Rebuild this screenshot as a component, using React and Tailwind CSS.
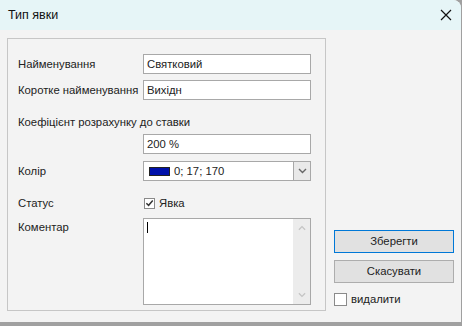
import React from "react";

const Check = () => (
  <svg width="10" height="10" viewBox="0 0 10 10" className="block">
    <path d="M1.5 5.2 L4 7.6 L8.6 2.2" fill="none" stroke="#333" strokeWidth="1.6" />
  </svg>
);

const Chevron = ({ up, color = "#8a8a8a", w = 9 }) => (
  <svg width={w} height="6" viewBox="0 0 9 6" className="block">
    <path d={up ? "M1 5 L4.5 1.5 L8 5" : "M1 1 L4.5 4.5 L8 1"} fill="none" stroke={color} strokeWidth="1.4" />
  </svg>
);

export default function App() {
  const font = { fontFamily: '"Liberation Sans", Arial, sans-serif' };
  return (
    <div className="w-[462px] h-[326px] bg-[#a0a0a0] relative overflow-hidden text-[11.3px] text-[#222]" style={font}>
      <div className="w-[461px] h-[322px] bg-[#f3f3f3] rounded-tr-[8px] flex flex-col overflow-hidden">
        <div className="h-[30px] bg-[#e6f5f7] flex items-center justify-between pl-[8px] pr-[9px] shrink-0">
          <span className="text-[12.5px] text-[#111]">Тип явки</span>
          <svg width="12" height="12" viewBox="0 0 12 12">
            <path d="M1 1 L11 11 M11 1 L1 11" stroke="#111" strokeWidth="1.2" />
          </svg>
        </div>
        <div className="flex-1 flex pl-[7px] pt-[8px]">
          <div className="w-[319px] h-[273px] border border-[#c6c6c6] flex flex-col px-[10px]">
            <div className="flex items-center h-[20px] mt-[15px]">
              <div className="w-[125px]">Найменування</div>
              <div className="w-[168px] h-[20px] border border-[#a8a8a8] bg-white flex items-center px-[3px]">Святковий</div>
            </div>
            <div className="flex items-center h-[20px] mt-[6px]">
              <div className="w-[125px] whitespace-nowrap">Коротке найменування</div>
              <div className="w-[168px] h-[20px] border border-[#a8a8a8] bg-white flex items-center px-[3px]">Вихідн</div>
            </div>
            <div className="flex items-center h-[16px] mt-[14px]">Коефіцієнт розрахунку до ставки</div>
            <div className="flex items-center h-[20px] mt-[4px]">
              <div className="w-[125px]"></div>
              <div className="w-[168px] h-[20px] border border-[#a8a8a8] bg-white flex items-center px-[3px]">200 %</div>
            </div>
            <div className="flex items-center h-[20px] mt-[7px]">
              <div className="w-[125px]">Колір</div>
              <div className="w-[168px] h-[20px] border border-[#a8a8a8] bg-white flex items-center">
                <div className="flex-1 flex items-center pl-[5px]">
                  <div className="w-[21px] h-[9px] bg-[#0011aa] border border-[#222]"></div>
                  <span className="ml-[4px]">0; 17; 170</span>
                </div>
                <div className="w-[17px] h-full bg-[#e9e9e9] border-l border-[#a8a8a8] flex items-center justify-center">
                  <Chevron color="#666" />
                </div>
              </div>
            </div>
            <div className="flex items-center h-[14px] mt-[15px]">
              <div className="w-[126px]">Статус</div>
              <div className="w-[11px] h-[11px] border border-[#8a8a8a] bg-white flex items-center justify-center">
                <Check />
              </div>
              <span className="ml-[4px]">Явка</span>
            </div>
            <div className="flex items-start mt-[8px]">
              <div className="w-[125px] leading-[18px]">Коментар</div>
              <div className="w-[168px] h-[87px] border border-[#a8a8a8] bg-white flex">
                <div className="flex-1 pl-[3px] pt-[3px]">
                  <div className="w-[1px] h-[11px] bg-black"></div>
                </div>
                <div className="w-[17px] h-full bg-[#ececec] flex flex-col items-center justify-between py-[6px]">
                  <Chevron up color="#c4c4c4" w={8} />
                  <Chevron color="#c4c4c4" w={8} />
                </div>
              </div>
            </div>
          </div>
          <div className="flex flex-col justify-end pl-[8px] pb-[14px]">
            <div className="w-[120px] h-[23px] border border-[#0078d7] bg-[#e1e1e1] flex items-center justify-center">Зберегти</div>
            <div className="w-[120px] h-[23px] border border-[#adadad] bg-[#e1e1e1] flex items-center justify-center mt-[7px]">Скасувати</div>
            <div className="flex items-center mt-[8px]">
              <div className="w-[13px] h-[13px] border border-[#8a8a8a] bg-white"></div>
              <span className="ml-[4px]">видалити</span>
            </div>
          </div>
        </div>
      </div>
    </div>
  );
}
